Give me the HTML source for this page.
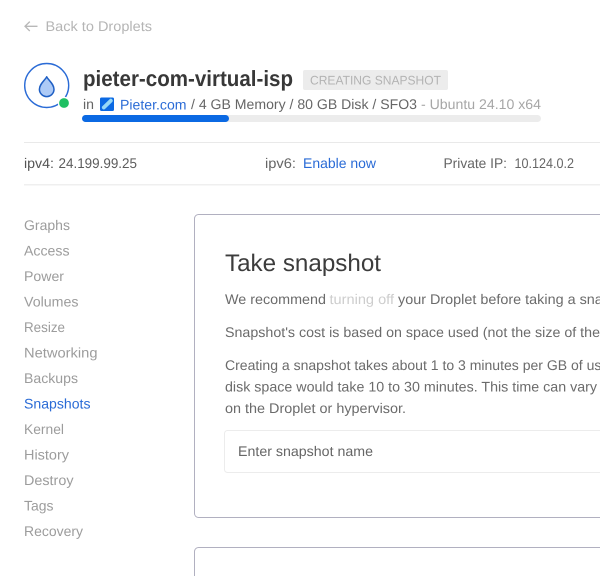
<!DOCTYPE html>
<html lang="en"><head><meta charset="utf-8"><title>Take snapshot</title>
<style>
html,body{margin:0;padding:0;background:#fff;width:600px;height:576px;overflow:hidden}
svg{display:block;position:absolute;left:0;top:0;overflow:hidden}
text{font-family:"Liberation Sans",sans-serif;font-size:14px;fill:#666;text-rendering:geometricPrecision}
.nav{fill:#9c9c9c;font-size:14px}
.p{fill:#6b6b6b;font-size:14px}
</style></head><body>
<svg width="600" height="576" viewBox="0 0 600 576" xmlns="http://www.w3.org/2000/svg">
<rect width="600" height="576" fill="#fff"/>
<!-- back -->
<path d="M37.5 26.300H25M29.800 21.600L25 26.300L29.800 31" fill="none" stroke="#b8b8b8" stroke-width="1.300"/>
<text x="45.500" y="31" textLength="106.500" lengthAdjust="spacingAndGlyphs" style="fill:#b5b5b5">Back to Droplets</text>
<!-- droplet icon -->
<circle cx="46.700" cy="85.500" r="22" fill="none" stroke="#2a6bd6" stroke-width="1.400"/>
<path d="M46.700 76.800C48.500 80.300 54 84 54 89.300A7.300 7.300 0 0 1 39.400 89.300C39.400 84 44.900 80.300 46.700 76.800Z" fill="#adcaf6" stroke="#1f5fc4" stroke-width="1.500" stroke-linejoin="round"/>
<circle cx="64" cy="103" r="6.200" fill="#fff"/>
<circle cx="64" cy="103" r="4.900" fill="#1fc063"/>
<!-- title -->
<text x="83" y="86" textLength="210" lengthAdjust="spacingAndGlyphs" style="font-size:22px;font-weight:bold;fill:#383838">pieter-com-virtual-isp</text>
<rect x="303" y="70" width="145" height="20" rx="2" fill="#ececec"/>
<text x="310" y="84.500" textLength="131" lengthAdjust="spacingAndGlyphs" style="font-size:12.500px;fill:#b3b3b3">CREATING SNAPSHOT</text>
<!-- meta -->
<text x="83" y="109" textLength="11" lengthAdjust="spacingAndGlyphs">in</text>
<rect x="100" y="97.500" width="14" height="13.500" rx="1.500" fill="#0b69e3"/>
<path d="M103.800 107.500L110.800 100.700" stroke="#96d8f7" stroke-width="3.800" stroke-linecap="round"/>
<text x="120" y="109.500" textLength="66.500" lengthAdjust="spacingAndGlyphs" style="fill:#2a6bd6">Pieter.com</text>
<text x="191" y="109" textLength="226" lengthAdjust="spacingAndGlyphs">/ 4 GB Memory / 80 GB Disk / SFO3</text>
<text x="421" y="109" textLength="120" lengthAdjust="spacingAndGlyphs" style="fill:#a6a6a6">- Ubuntu 24.10 x64</text>
<!-- progress -->
<rect x="82" y="115" width="459" height="7" rx="3.500" fill="#ececec"/>
<rect x="82" y="115" width="147" height="7" rx="3.500" fill="#0b69e3"/>
<!-- rules -->
<rect x="24" y="142" width="576" height="1" fill="#e9e9e9"/>
<rect x="24" y="184" width="576" height="1.500" fill="#efefef"/>
<!-- ip row -->
<text x="24" y="168" textLength="30" lengthAdjust="spacingAndGlyphs" style="fill:#555">ipv4:</text>
<text x="58.500" y="168" textLength="78.500" lengthAdjust="spacingAndGlyphs" style="fill:#5c5c5c">24.199.99.25</text>
<text x="265" y="168" textLength="31" lengthAdjust="spacingAndGlyphs" style="fill:#666">ipv6:</text>
<text x="303" y="168" textLength="73" lengthAdjust="spacingAndGlyphs" style="fill:#2a6bd6">Enable now</text>
<text x="443.500" y="168" textLength="63.500" lengthAdjust="spacingAndGlyphs" style="fill:#666">Private IP:</text>
<text x="514.500" y="168" textLength="59.500" lengthAdjust="spacingAndGlyphs" style="fill:#666">10.124.0.2</text>
<!-- nav -->
<text class="nav" x="24" y="230" textLength="46" lengthAdjust="spacingAndGlyphs">Graphs</text>
<text class="nav" x="24" y="255.500" textLength="45.500" lengthAdjust="spacingAndGlyphs">Access</text>
<text class="nav" x="24" y="281" textLength="40" lengthAdjust="spacingAndGlyphs">Power</text>
<text class="nav" x="24" y="306.500" textLength="54.500" lengthAdjust="spacingAndGlyphs">Volumes</text>
<text class="nav" x="24" y="332" textLength="41" lengthAdjust="spacingAndGlyphs">Resize</text>
<text class="nav" x="24" y="357.500" textLength="73.500" lengthAdjust="spacingAndGlyphs">Networking</text>
<text class="nav" x="24" y="383" textLength="54" lengthAdjust="spacingAndGlyphs">Backups</text>
<text class="nav" x="24" y="408.500" textLength="66.500" lengthAdjust="spacingAndGlyphs" style="fill:#2a6bd6">Snapshots</text>
<text class="nav" x="24" y="434" textLength="40" lengthAdjust="spacingAndGlyphs">Kernel</text>
<text class="nav" x="24" y="459.500" textLength="45" lengthAdjust="spacingAndGlyphs">History</text>
<text class="nav" x="24" y="485" textLength="49.500" lengthAdjust="spacingAndGlyphs">Destroy</text>
<text class="nav" x="24" y="510.500" textLength="29.500" lengthAdjust="spacingAndGlyphs">Tags</text>
<text class="nav" x="24" y="536" textLength="59" lengthAdjust="spacingAndGlyphs">Recovery</text>
<!-- cards -->
<path d="M600 214.500H198.500A4 4 0 0 0 194.500 218.500V513.500A4 4 0 0 0 198.500 517.500H600" fill="none" stroke="#b1b0c0" stroke-width="1"/>
<path d="M600 547.500H198.500A4 4 0 0 0 194.500 551.500V576" fill="none" stroke="#b1b0c0" stroke-width="1"/>
<text x="225" y="271" textLength="156" lengthAdjust="spacingAndGlyphs" style="font-size:24px;fill:#3c3c3c">Take snapshot</text>
<text class="p" x="225" y="304" textLength="101" lengthAdjust="spacingAndGlyphs">We recommend</text>
<text class="p" x="329.500" y="304" textLength="64.500" lengthAdjust="spacingAndGlyphs" style="fill:#cdcdcd">turning off</text>
<text class="p" x="398" y="304" textLength="244" lengthAdjust="spacingAndGlyphs">your Droplet before taking a snapshot.</text>
<text class="p" x="225" y="337" textLength="375" lengthAdjust="spacingAndGlyphs">Snapshot's cost is based on space used (not the size of the</text>
<text class="p" x="225" y="370" textLength="392" lengthAdjust="spacingAndGlyphs">Creating a snapshot takes about 1 to 3 minutes per GB of used</text>
<text class="p" x="225" y="391.500" textLength="372" lengthAdjust="spacingAndGlyphs">disk space would take 10 to 30 minutes. This time can vary</text>
<text class="p" x="225" y="413" textLength="181" lengthAdjust="spacingAndGlyphs">on the Droplet or hypervisor.</text>
<path d="M600 430.500H227.500A3 3 0 0 0 224.500 433.500V469.500A3 3 0 0 0 227.500 472.500H600" fill="none" stroke="#ececec" stroke-width="1"/>
<text x="238" y="456" textLength="135" lengthAdjust="spacingAndGlyphs" style="fill:#666">Enter snapshot name</text>
</svg>
</body></html>
